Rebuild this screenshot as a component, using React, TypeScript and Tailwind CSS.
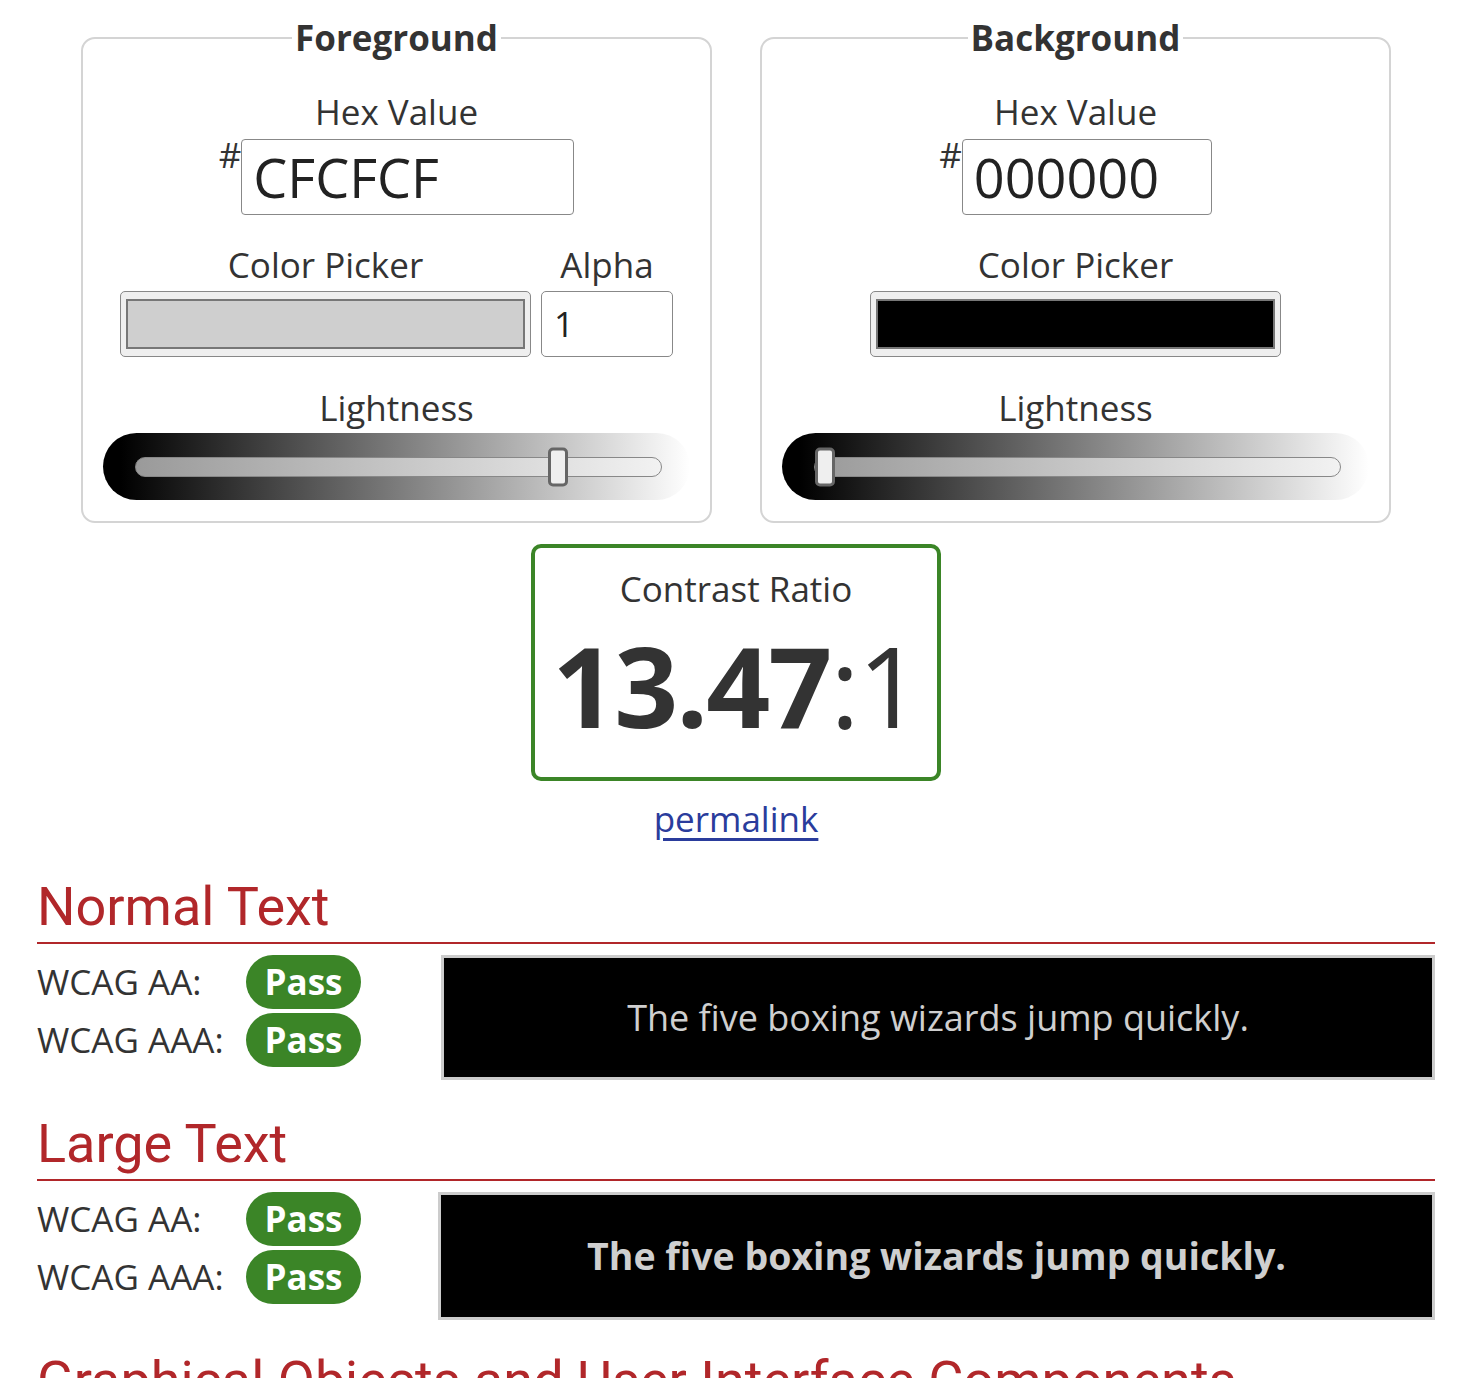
import React from 'react';

const body = { fontFamily: '"Open Sans", "Liberation Sans", sans-serif' };
const heading = { fontFamily: 'Roboto, "Liberation Sans", sans-serif' };

function Slider({ value }: { value: number }) {
  // value 0..1 - thumb position along the track
  return (
    <div className="mt-[4px] flex h-[67px] w-[587px] items-center rounded-full bg-[linear-gradient(to_right,#000_0%,#000_3%,#fff_100%)] pl-[32px] pr-[28px]">
      <div className="relative h-[20px] w-full rounded-full border border-[#888] bg-[linear-gradient(to_right,#9a9a9a,#f2f2f2)]">
        <div
          className="absolute top-1/2 h-[39px] w-[20px] -translate-y-1/2 rounded-[5px] border-[3px] border-[#666] bg-[#efefef]"
          style={{ left: `calc(${value * 100}% - ${value * 20}px)` }}
        />
      </div>
    </div>
  );
}

function ColorPanel({
  title,
  hex,
  hexWidth,
  swatch,
  lightness,
  alpha,
}: {
  title: string;
  hex: string;
  hexWidth: string;
  swatch: string;
  lightness: number;
  alpha?: boolean;
}) {
  return (
    <fieldset className="w-[630px] rounded-[14px] border-2 border-[#d4d4d4] px-5 pb-[21px]">
      <legend className="mx-auto px-[3px] text-[35px] font-bold leading-[42px] text-[#333]">{title}</legend>
      <div className="mt-[32px] flex flex-col items-center">
        <div className="text-[35px] leading-[42px]">Hex Value</div>
        <div className="mt-[6px] flex items-start">
          <span className="text-[35px] leading-[32px]">#</span>
          <div
            className={`flex h-[76px] items-center rounded-[4px] border border-[#888] px-[11px] text-[54px] leading-none text-[#222] ${hexWidth}`}
          >
            {hex}
          </div>
        </div>
        <div className="mt-[29px] flex gap-[10px]">
          <div className="flex flex-col items-center">
            <div className="text-[35px] leading-[42px]">Color Picker</div>
            <div className="mt-[5px] h-[66px] w-[411px] rounded-[5px] border border-[#888] bg-[#efefef] px-[5px] py-[7px]">
              <div className="h-full w-full border-[2px] border-[#777]" style={{ background: swatch }} />
            </div>
          </div>
          {alpha && (
            <div className="flex flex-col items-center">
              <div className="text-[35px] leading-[42px]">Alpha</div>
              <div className="mt-[5px] flex h-[66px] w-[132px] items-center rounded-[5px] border border-[#888] px-[12px] text-[35px] text-[#222]">
                1
              </div>
            </div>
          )}
        </div>
        <div className="mt-[30px] text-[35px] leading-[42px]">Lightness</div>
        <Slider value={lightness} />
      </div>
    </fieldset>
  );
}

function Badge() {
  return (
    <span className="inline-flex h-[54px] w-[115px] items-center justify-center rounded-full bg-[#3b8527] text-[35px] font-bold text-white">
      Pass
    </span>
  );
}

function Section({ title, bold, boxLeft }: { title: string; bold?: boolean; boxLeft: string }) {
  return (
    <section>
      <h2 className="text-[54px] leading-[62px] text-[#b1272a]" style={heading}>
        {title}
      </h2>
      <div className="mt-[4px] h-[2px] bg-[#b1272a]" />
      <div className="mt-[11px] flex">
        <div className={`flex flex-col gap-[4px] ${boxLeft}`}>
          {['WCAG AA:', 'WCAG AAA:'].map((l) => (
            <div key={l} className="flex items-center">
              <span className="w-[209px] text-[35px] leading-[54px]">{l}</span>
              <Badge />
            </div>
          ))}
        </div>
        <div
          className={`flex flex-1 items-center justify-center border-[3px] border-[#cccccc] bg-black text-[#cfcfcf] ${
            bold ? 'h-[128px] text-[37.5px] font-bold' : 'h-[125px] text-[36px]'
          }`}
        >
          The five boxing wizards jump quickly.
        </div>
      </div>
    </section>
  );
}

export default function App() {
  return (
    <div className="min-h-screen bg-white pl-[37px] pr-[31px] pt-[17px] text-[#333]" style={body}>
      <div className="flex justify-center gap-[48px]">
        <ColorPanel title="Foreground" hex="CFCFCF" hexWidth="w-[333px]" swatch="#cfcfcf" lightness={0.815} alpha />
        <ColorPanel title="Background" hex="000000" hexWidth="w-[250px]" swatch="#000000" lightness={0} />
      </div>

      <div className="mt-[21px] flex flex-col items-center">
        <div className="flex h-[237px] w-[410px] flex-col items-center rounded-[10px] border-4 border-[#3b8527]">
          <div className="mt-[20px] text-[35px] leading-[42px]">Contrast Ratio</div>
          <div className="mt-[19px] text-[112px] leading-none tracking-[-2px]">
            <span className="font-bold">13.47</span>:1
          </div>
        </div>
        <a href="#" className="mt-[14px] text-[35px] leading-[48px] text-[#2a3c9c] underline underline-offset-[6px]">
          permalink
        </a>
      </div>

      <div className="mt-[33px]">
        <Section title="Normal Text" boxLeft="w-[404px]" />
      </div>
      <div className="mt-[33px]">
        <Section title="Large Text" bold boxLeft="w-[401px]" />
      </div>
      <h2 className="mt-[30px] text-[54px] leading-[62px] text-[#b1272a]" style={heading}>
        Graphical Objects and User Interface Components
      </h2>
    </div>
  );
}
